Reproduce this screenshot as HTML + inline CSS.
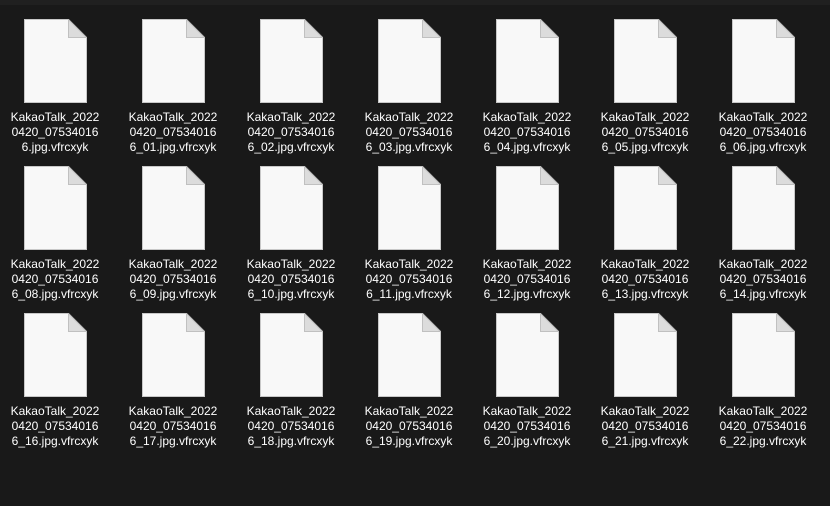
<!DOCTYPE html><html><head><style>
body{margin:0;width:830px;height:506px;background:#191919;overflow:hidden;position:relative;font-family:"Liberation Sans",sans-serif}
.top{position:absolute;left:0;top:0;width:830px;height:5px;background:#202020}
.it{position:absolute;width:118px;text-align:center;color:#fff;font-size:12px;line-height:15px}
.it svg{display:block;margin:0 auto 0 24px}
.t{margin-top:7px;width:100px;margin-left:5px;word-break:break-all}
</style></head><body><div class="top"></div>
<script>
var rows=[["","_01","_02","_03","_04","_05","_06"],["_08","_09","_10","_11","_12","_13","_14"],["_16","_17","_18","_19","_20","_21","_22"]];
var h="";
rows.forEach(function(r,ri){r.forEach(function(s,ci){
h+='<div class="it" style="left:'+(ci*118)+'px;top:'+(19+ri*147)+'px"><svg width="63" height="84" viewBox="0 0 63 84"><path d="M0.5 0.5H44.5L62.5 18.5V83.5H0.5Z" fill="#f8f8f8" stroke="#c8c8c8"/><path d="M44.5 0.5V18.5H62.5Z" fill="#dcdcdc" stroke="#c0c0c0"/></svg><div class="t">KakaoTalk_2022<br>0420_07534016<br>6'+s+'.jpg.vfrcxyk</div></div>';
});});
document.write(h);
</script>
</body></html>
